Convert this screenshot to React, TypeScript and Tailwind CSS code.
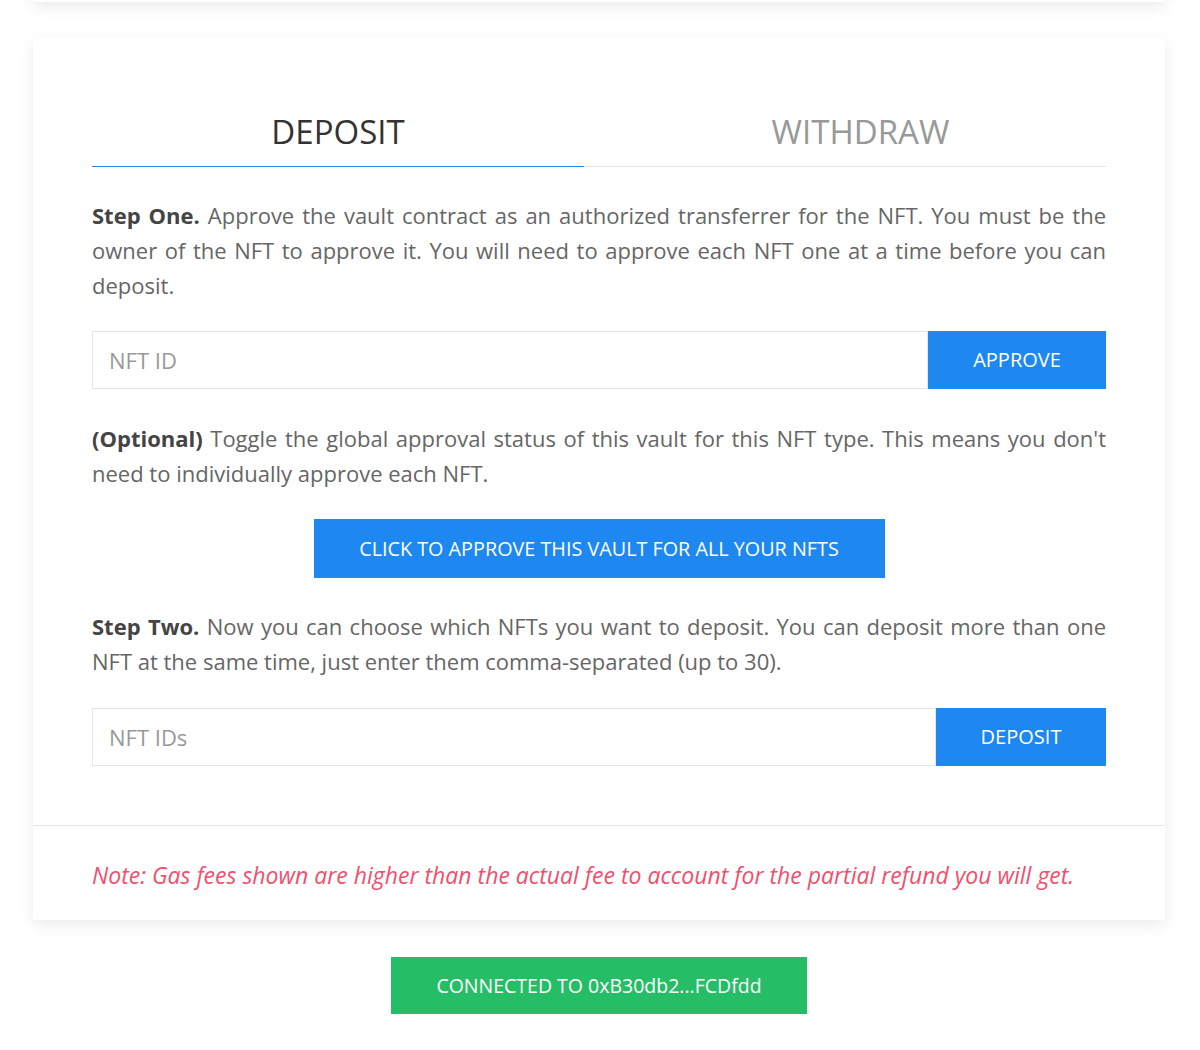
import React from "react";

const font = { fontFamily: '"Open Sans", "Liberation Sans", sans-serif' };

// one block per visual line so the wraps match; every line but the last is justified
function Lines({ lines }: { lines: React.ReactNode[] }) {
  return (
    <p className="text-[22px] leading-[35px]">
      {lines.map((l, i) => (
        <span
          key={i}
          className={`block whitespace-nowrap ${i < lines.length - 1 ? "text-justify [text-align-last:justify]" : ""}`}
        >
          {l}
        </span>
      ))}
    </p>
  );
}

function InputRow({ placeholder, label, btnWidth }: { placeholder: string; label: string; btnWidth: string }) {
  return (
    <div className="flex h-[58px]">
      <input
        placeholder={placeholder}
        className="min-w-0 flex-1 border border-[#e5e5e5] bg-white px-4 text-[22px] text-[#666] outline-none placeholder:text-[#999]"
      />
      <button className={`${btnWidth} bg-[#1e87f0] text-[20px] uppercase text-white`}>{label}</button>
    </div>
  );
}

export default function App() {
  return (
    <div className="min-h-[1050px] bg-white pl-[33px] pr-[35px] text-[#666]" style={font}>
      <div className="-mt-[40px] h-[42px] bg-white shadow-[0_5px_15px_rgba(0,0,0,0.08)]" />

      <div className="mt-[35px] bg-white shadow-[0_5px_15px_rgba(0,0,0,0.08)]">
        <div className="pb-[59px] pl-[59px] pr-[59px] pt-[61px]">
          <div className="flex">
            <div className="flex h-[69px] w-[492px] items-center justify-center border-b border-[#1e87f0] text-[33px] text-[#333]">
              DEPOSIT
            </div>
            <div className="flex h-[69px] flex-1 items-center justify-center border-b border-[#e5e5e5] pl-[31px] text-[33px] text-[#999]">
              WITHDRAW
            </div>
          </div>

          <div className="mt-[31px]">
            <Lines
              lines={[
                <>
                  <b className="text-[#444]">Step One.</b> Approve the vault contract as an authorized transferrer for
                  the NFT. You must be the
                </>,
                "owner of the NFT to approve it. You will need to approve each NFT one at a time before you can",
                "deposit.",
              ]}
            />
          </div>

          <div className="mt-[28px]">
            <InputRow placeholder="NFT ID" label="Approve" btnWidth="w-[178px]" />
          </div>

          <div className="mt-[32px]">
            <Lines
              lines={[
                <>
                  <b className="text-[#444]">(Optional)</b> Toggle the global approval status of this vault for this NFT
                  type. This means you don't
                </>,
                "need to individually approve each NFT.",
              ]}
            />
          </div>

          <div className="mt-[28px] flex justify-center">
            <button className="h-[59px] w-[571px] bg-[#1e87f0] text-[19.8px] uppercase text-white">
              Click to approve this vault for all your NFTs
            </button>
          </div>

          <div className="mt-[31px]">
            <Lines
              lines={[
                <>
                  <b className="text-[#444]">Step Two.</b> Now you can choose which NFTs you want to deposit. You can
                  deposit more than one
                </>,
                "NFT at the same time, just enter them comma-separated (up to 30).",
              ]}
            />
          </div>

          <div className="mt-[29px]">
            <InputRow placeholder="NFT IDs" label="Deposit" btnWidth="w-[170px]" />
          </div>
        </div>

        <div className="flex h-[95px] items-center border-t border-[#e5e5e5] px-[59px] pt-[5px]">
          <p className="whitespace-nowrap text-[23px] italic text-[#f0506e]">
            Note: Gas fees shown are higher than the actual fee to account for the partial refund you will get.
          </p>
        </div>
      </div>

      <div className="mt-[37px] flex justify-center">
        <button className="h-[57px] w-[416px] bg-[#25bd65] text-[19.5px] text-white">CONNECTED TO 0xB30db2...FCDfdd</button>
      </div>
    </div>
  );
}
